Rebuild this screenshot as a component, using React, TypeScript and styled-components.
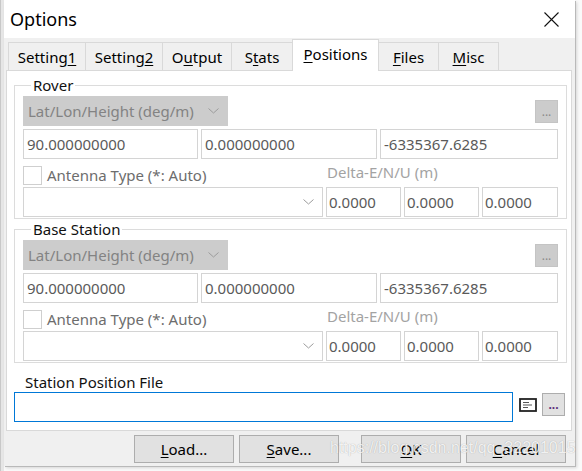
import React from "react";
import styled, { createGlobalStyle } from "styled-components";

const Global = createGlobalStyle`
  html, body { margin: 0; padding: 0; background: #ffffff; }
  body { font-family: "Noto Sans", "Open Sans", sans-serif; }
  * { box-sizing: border-box; }
`;

const Page = styled.div`
  position: relative;
  width: 582px;
  height: 471px;
  overflow: hidden;
  display: flex;
  background: #fafafa;
`;

const Edge = styled.div`
  width: 4px;
  height: 471px;
  background: #e6e6e6;
  border-left: 1px solid #c8c8c8;
`;

const Win = styled.div`
  width: 571px;
  height: 466px;
  display: flex;
  flex-direction: column;
  background: #f0f0f0;
  box-shadow: 1px 1px 0 #b9b9b9, 2px 2px 3px rgba(0, 0, 0, 0.15);
`;

const TitleBar = styled.div`
  height: 38px;
  flex: none;
  background: #ffffff;
  display: flex;
  align-items: center;
  justify-content: space-between;
  padding: 0 16px 0 6px;
`;

const Title = styled.div`
  font-size: 18px;
  color: #000;
  line-height: 22px;
`;

const Body = styled.div`
  flex: 1;
  display: flex;
  flex-direction: column;
  padding: 0 3px 0 2px;
`;

const TabBar = styled.div`
  height: 32px;
  display: flex;
  align-items: flex-end;
  padding-left: 3px;
`;

const Tab = styled.div<{ $w: number; $active?: boolean }>`
  position: relative;
  width: ${(p) => p.$w}px;
  height: ${(p) => (p.$active ? 32 : 28)}px;
  margin-bottom: ${(p) => (p.$active ? -1 : 0)}px;
  margin-left: -1px;
  z-index: ${(p) => (p.$active ? 2 : 1)};
  background: ${(p) => (p.$active ? "#ffffff" : "#f0f0f0")};
  border: 1px solid #d9d9d9;
  border-bottom: none;
  display: flex;
  align-items: center;
  justify-content: center;
  padding-bottom: ${(p) => (p.$active ? 4 : 0)}px;
  font-size: 15px;
  color: #000;
`;

const Key = styled.span`
  text-decoration: underline;
  text-underline-offset: 2px;
`;

const Panel = styled.div`
  position: relative;
  z-index: 1;
  background: #ffffff;
  border: 1px solid #d9d9d9;
  padding: 5px 4px 8px 7px;
  display: flex;
  flex-direction: column;
`;

const Group = styled.fieldset<{ $gap?: number }>`
  margin: ${(p) => p.$gap ?? 0}px 0 0 0;
  padding: 2px 8px 1px 8px;
  min-width: 0;
  border: 1px solid #dcdcdc;
`;

const Legend = styled.legend`
  margin-left: 8px;
  padding: 0 2px;
  font-size: 15px;
  line-height: 18px;
  color: #111;
`;

const TopRow = styled.div`
  height: 30px;
  margin-bottom: 3px;
  display: flex;
  align-items: center;
  justify-content: space-between;
`;

const Combo = styled.div<{ $disabled?: boolean; $w?: number }>`
  height: 30px;
  width: ${(p) => (p.$w ? `${p.$w}px` : "auto")};
  display: flex;
  align-items: center;
  justify-content: space-between;
  padding: 0 8px 0 4px;
  background: ${(p) => (p.$disabled ? "#cccccc" : "#ffffff")};
  border: 1px solid ${(p) => (p.$disabled ? "#cccccc" : "#d4d4d4")};
  color: #838383;
  font-size: 15px;
`;

const Chevron = () => (
  <svg width="11" height="6" viewBox="0 0 11 6">
    <polyline points="0.5,0.5 5.5,5 10.5,0.5" fill="none" stroke="#9c9c9c" strokeWidth="1" />
  </svg>
);

const DotsButton = styled.div<{ $disabled?: boolean }>`
  width: 23px;
  height: 23px;
  display: flex;
  align-items: flex-end;
  justify-content: center;
  padding-bottom: 6px;
  background: ${(p) => (p.$disabled ? "#cccccc" : "#e1e1e1")};
  border: 1px solid ${(p) => (p.$disabled ? "#c4c4c4" : "#adadad")};
  color: ${(p) => (p.$disabled ? "#8a8a8a" : "#5b2d7a")};
  font-size: 12px;
  font-weight: ${(p) => (p.$disabled ? 400 : 700)};
  line-height: 8px;
  letter-spacing: 0;
`;

const ValueRow = styled.div`
  display: grid;
  grid-template-columns: 175px 1fr 178px;
  gap: 3px;
`;

const Field = styled.div<{ $pad?: number }>`
  height: 30px;
  display: flex;
  align-items: center;
  padding-left: ${(p) => p.$pad ?? 3}px;
  background: #ffffff;
  border: 1px solid #d4d4d4;
  color: #5a5a5a;
  font-size: 15px;
  white-space: nowrap;
  overflow: hidden;
`;

const CheckRow = styled.div`
  height: 28px;
  display: grid;
  grid-template-columns: 1fr 75px 75px 76px;
  column-gap: 3px;
  align-items: end;
  padding-bottom: 2px;
`;

const CheckLabel = styled.label`
  display: flex;
  align-items: center;
  gap: 5px;
  font-size: 15px;
  line-height: 19px;
  color: #6d6d6d;
`;

const Box = styled.span`
  width: 19px;
  height: 19px;
  background: #ffffff;
  border: 1px solid #cfcfcf;
`;

const Hint = styled.div`
  grid-column: 2 / span 3;
  padding-left: 1px;
  font-size: 15px;
  line-height: 22px;
  align-self: center;
  color: #a3a3a3;
`;

const AntRow = styled.div`
  display: grid;
  grid-template-columns: 1fr 75px 75px 76px;
  gap: 3px;
`;

const FileLabel = styled.div`
  margin: 10px 0 0 11px;
  font-size: 15px;
  line-height: 18px;
  color: #111;
`;

const FileRow = styled.div`
  margin-top: 1px;
  display: flex;
  align-items: flex-start;
`;

const FileInput = styled.div`
  width: 499px;
  height: 30px;
  background: #fff;
  border: 1px solid #0078d7;
`;

const ViewIcon = styled.svg`
  margin: 6px 0 0 6px;
  flex: none;
`;

const FileDots = styled(DotsButton)`
  margin: 1px 0 0 5px;
`;

const Footer = styled.div`
  position: relative;
  flex: 1;
  display: flex;
  justify-content: flex-end;
  align-items: flex-start;
  padding: 4px 6px 0 0;
`;

const Btn = styled.div<{ $gap?: number }>`
  width: 100px;
  height: 28px;
  margin-left: ${(p) => p.$gap ?? 5}px;
  display: flex;
  align-items: center;
  justify-content: center;
  background: #e1e1e1;
  border: 1px solid #adadad;
  font-size: 15px;
  color: #000;
`;

const Watermark = styled.div`
  position: absolute;
  left: 324px;
  top: 8px;
  font-family: "Liberation Sans", Arial, sans-serif;
  font-size: 16px;
  line-height: 18px;
  color: rgba(255, 255, 255, 0.85);
  text-shadow: 0 0 1px rgba(0, 0, 0, 0.3);
  white-space: nowrap;
  pointer-events: none;
`;

const CloseIcon = () => (
  <svg width="15" height="15" viewBox="0 0 15 15">
    <path d="M0.5 0.5 L14.5 14.5 M14.5 0.5 L0.5 14.5" stroke="#111" strokeWidth="1.1" fill="none" />
  </svg>
);

type GroupProps = { title: string; gap?: number };

const PositionGroup = ({ title, gap }: GroupProps) => (
  <Group $gap={gap}>
    <Legend>{title}</Legend>
    <TopRow>
      <Combo $disabled $w={205}>
        <span>Lat/Lon/Height (deg/m)</span>
        <Chevron />
      </Combo>
      <DotsButton $disabled>...</DotsButton>
    </TopRow>
    <ValueRow>
      <Field>90.000000000</Field>
      <Field>0.000000000</Field>
      <Field>-6335367.6285</Field>
    </ValueRow>
    <CheckRow>
      <CheckLabel>
        <Box />
        Antenna Type (*: Auto)
      </CheckLabel>
      <Hint>Delta-E/N/U (m)</Hint>
    </CheckRow>
    <AntRow>
      <Combo>
        <span />
        <Chevron />
      </Combo>
      <Field $pad={2}>0.0000</Field>
      <Field $pad={2}>0.0000</Field>
      <Field $pad={2}>0.0000</Field>
    </AntRow>
  </Group>
);

const tabs: { w: number; node: React.ReactNode; active?: boolean }[] = [
  { w: 78, node: <>Setting<Key>1</Key></> },
  { w: 78, node: <>Setting<Key>2</Key></> },
  { w: 70, node: <>O<Key>u</Key>tput</> },
  { w: 62, node: <>S<Key>t</Key>ats</> },
  { w: 87, node: <><Key>P</Key>ositions</>, active: true },
  { w: 61, node: <><Key>F</Key>iles</> },
  { w: 61, node: <><Key>M</Key>isc</> },
];

export default function App() {
  return (
    <>
      <Global />
      <Page>
        <Edge />
        <Win>
          <TitleBar>
            <Title>Options</Title>
            <CloseIcon />
          </TitleBar>
          <Body>
            <TabBar>
              {tabs.map((t, i) => (
                <Tab key={i} $w={t.w} $active={t.active}>
                  <span>{t.node}</span>
                </Tab>
              ))}
            </TabBar>
            <Panel>
              <PositionGroup title="Rover" />
              <PositionGroup title="Base Station" gap={1} />
              <FileLabel>Station Position File</FileLabel>
              <FileRow>
                <FileInput />
                <ViewIcon width="18" height="14" viewBox="0 0 18 14">
                  <rect x="1" y="1" width="16" height="12" fill="#fff" stroke="#222" strokeWidth="1.8" />
                  <path d="M4 4.5 H10 M4 7 H13 M4 9.5 H9" stroke="#555" strokeWidth="1" />
                </ViewIcon>
                <FileDots>...</FileDots>
              </FileRow>
            </Panel>
            <Footer>
              <Btn><span><Key>L</Key>oad...</span></Btn>
              <Btn><span><Key>S</Key>ave...</span></Btn>
              <Btn $gap={22}><span><Key>O</Key>K</span></Btn>
              <Btn><span><Key>C</Key>ancel</span></Btn>
              <Watermark>https://blog.csdn.net/qq_32201015</Watermark>
            </Footer>
          </Body>
        </Win>
      </Page>
    </>
  );
}
